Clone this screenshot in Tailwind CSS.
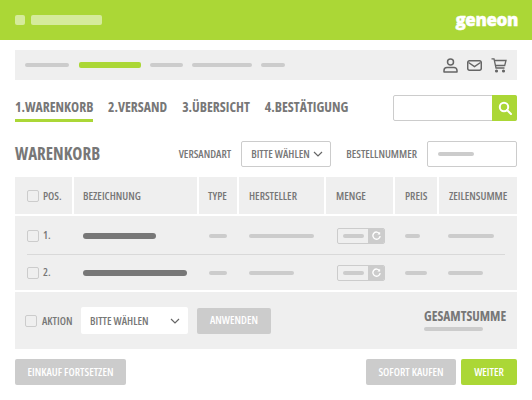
<!DOCTYPE html>
<html lang="de">
<head>
<meta charset="utf-8">
<script src="https://cdn.jsdelivr.net/npm/@tailwindcss/browser@4"></script>
</head>
<body class="w-[532px] h-[400px] overflow-hidden bg-white font-['Open_Sans','Liberation_Sans',sans-serif] font-stretch-[75%] text-[#777]">
<header class="h-10 bg-[#abd736] flex items-center pl-[15px] pr-[14px] gap-1.5">
  <div class="w-2.5 h-2.5 rounded-[2px] bg-white/50"></div>
  <div class="w-[71px] h-2.5 rounded-[2px] bg-white/50"></div>
  <div class="ml-auto text-white text-[17px] leading-none font-extrabold tracking-[-0.4px] font-stretch-normal [-webkit-text-stroke:0.4px_white] -mt-[2px]">geneon</div>
</header>
<nav class="mx-[15px] mt-2.5 h-[30px] bg-[#efefef] flex items-center pl-2.5 pr-2.5">
  <div class="w-11 h-1 rounded-full bg-[#ccc]"></div>
  <div class="w-[62px] h-1.5 rounded-[2px] bg-[#abd736] ml-2.5"></div>
  <div class="w-[33px] h-1 rounded-full bg-[#ccc] ml-[9px]"></div>
  <div class="w-[60px] h-1 rounded-full bg-[#ccc] ml-[9px]"></div>
  <div class="w-6 h-1 rounded-full bg-[#ccc] ml-[9px]"></div>
  <div class="ml-auto flex items-center gap-[9px]">
    <svg class="w-[15px] h-[15px]" viewBox="0 0 15 15" fill="none" stroke="#666" stroke-width="1.5"><circle cx="7.5" cy="4" r="3"/><path d="M1 14v-1.5a3 3 0 0 1 3-3h7a3 3 0 0 1 3 3V14z" stroke-linejoin="round"/></svg>
    <svg class="w-[15px] h-[11px]" viewBox="0 0 15 11" fill="none" stroke="#666" stroke-width="1.5"><rect x="0.7" y="0.7" width="13.6" height="9.6" rx="2"/><path d="M1.5 2.5 7.5 6.5 13.5 2.5"/></svg>
    <svg class="w-4 h-[15px]" viewBox="0 0 16 15" fill="none" stroke="#666" stroke-width="1.3"><path d="M0.5 0.8H3l2 9.2h8.5"/><path d="M3.3 2.5H15l-1.3 5H4.4"/><circle cx="5.5" cy="13" r="0.9" fill="#666"/><circle cx="12.5" cy="13" r="0.9" fill="#666"/></svg>
  </div>
</nav>
<section class="mx-[15px] mt-[15px] h-[26px] flex items-start">
  <div class="flex gap-[15px] pt-1 text-[13.7px] leading-4 font-bold">
    <div class="w-[78px] h-[23px] border-b-[3px] border-[#abd736] whitespace-nowrap">1.WARENKORB</div>
    <div class="whitespace-nowrap">2.VERSAND</div>
    <div class="whitespace-nowrap">3.ÜBERSICHT</div>
    <div class="whitespace-nowrap">4.BESTÄTIGUNG</div>
  </div>
  <div class="ml-auto w-[124px] h-[26px] flex border border-[#ccc] rounded-[2px]">
    <div class="flex-1"></div>
    <div class="w-[25px] -my-px -mr-px bg-[#abd736] rounded-r-[2px] flex items-center justify-center">
      <svg class="w-[14px] h-[14px]" viewBox="0 0 14 14" fill="none" stroke="#fff" stroke-width="2"><circle cx="6" cy="6" r="4.2"/><path d="M9 9l4 4" stroke-linecap="round"/></svg>
    </div>
  </div>
</section>
<section class="mx-[15px] mt-5 h-[26px] flex items-center">
  <h1 class="text-[17px] leading-none font-bold -mt-0.5">WARENKORB</h1>
  <span class="ml-auto text-[11px] font-semibold">VERSANDART</span>
  <div class="ml-[10px] w-[90px] h-[26px] border border-[#ccc] rounded-[2px] flex items-center justify-between pl-[9px] pr-[7px] text-[11px] font-semibold">
    <span class="whitespace-nowrap">BITTE WÄHLEN</span>
    <svg class="w-[10px] h-[6px]" viewBox="0 0 10 6" fill="none" stroke="#666" stroke-width="1.2"><path d="M1 1l4 4 4-4"/></svg>
  </div>
  <span class="ml-[15px] text-[11px] font-semibold">BESTELLNUMMER</span>
  <div class="ml-2.5 w-[90px] h-[26px] border border-[#ccc] rounded-[2px] flex items-center pl-2.5">
    <div class="w-[36px] h-1 rounded-full bg-[#ccc]"></div>
  </div>
</section>
<section class="mx-[15px] mt-2.5">
  <div class="grid grid-cols-[57px_123px_38px_85px_67px_42px_78px] gap-x-0.5 h-[37px] text-[11px] font-semibold">
    <div class="bg-[#efefef] flex items-center pl-3 gap-1 pt-px"><div class="w-3 h-3 border border-[#ccc] rounded-[2px]"></div>POS.</div>
    <div class="bg-[#efefef] flex items-center pl-[9px] pt-px">BEZEICHNUNG</div>
    <div class="bg-[#efefef] flex items-center pl-[9px] pt-px">TYPE</div>
    <div class="bg-[#efefef] flex items-center pl-[10px] pt-px">HERSTELLER</div>
    <div class="bg-[#efefef] flex items-center pl-[10px] pt-px">MENGE</div>
    <div class="bg-[#efefef] flex items-center pl-[10px] pt-px">PREIS</div>
    <div class="bg-[#efefef] flex items-center pl-[10px] pt-px">ZEILENSUMME</div>
  </div>
  <div class="mt-0.5 h-[74px] bg-[#efefef] px-3">
    <div class="h-[39px] pt-px border-b border-[#d9d9d9] flex items-center text-[11px] font-semibold">
      <div class="w-3 h-3 border border-[#ccc] rounded-[2px]"></div><span class="ml-1 w-10">1.</span>
      <div class="w-[73px] h-1.5 rounded-full bg-[#777]"></div>
      <div class="w-[18px] h-1 rounded-full bg-[#ccc] ml-[53px]"></div>
      <div class="w-[65px] h-1 rounded-full bg-[#ccc] ml-[22px]"></div>
      <div class="ml-[23px] w-12 h-4 border border-[#ccc] rounded-[2px] flex items-center overflow-hidden"><div class="w-[21px] h-1 rounded-full bg-[#ccc] ml-[5px]"></div><div class="ml-auto w-4 h-4 bg-[#ccc] flex items-center justify-center"><svg class="w-[9px] h-[9px]" viewBox="0 0 10 10" fill="none" stroke="#fff" stroke-width="1.5"><path d="M8.5 3.2A4 4 0 1 0 9 5.5"/><path d="M9 0.8v3H6" fill="#fff" stroke="none"/></svg></div></div>
      <div class="w-[15px] h-1 rounded-full bg-[#ccc] ml-5"></div>
      <div class="w-[46px] h-1 rounded-full bg-[#ccc] ml-[28px]"></div>
    </div>
    <div class="h-[35px] flex items-center text-[11px] font-semibold">
      <div class="w-3 h-3 border border-[#ccc] rounded-[2px]"></div><span class="ml-1 w-10">2.</span>
      <div class="w-[104px] h-1.5 rounded-full bg-[#777]"></div>
      <div class="w-[18px] h-1 rounded-full bg-[#ccc] ml-[22px]"></div>
      <div class="w-[45px] h-1 rounded-full bg-[#ccc] ml-[22px]"></div>
      <div class="ml-[43px] w-12 h-4 border border-[#ccc] rounded-[2px] flex items-center overflow-hidden"><div class="w-[21px] h-1 rounded-full bg-[#ccc] ml-[5px]"></div><div class="ml-auto w-4 h-4 bg-[#ccc] flex items-center justify-center"><svg class="w-[9px] h-[9px]" viewBox="0 0 10 10" fill="none" stroke="#fff" stroke-width="1.5"><path d="M8.5 3.2A4 4 0 1 0 9 5.5"/><path d="M9 0.8v3H6" fill="#fff" stroke="none"/></svg></div></div>
      <div class="w-[22px] h-1 rounded-full bg-[#ccc] ml-5"></div>
      <div class="w-[35px] h-1 rounded-full bg-[#ccc] ml-[21px]"></div>
    </div>
  </div>
  <div class="mt-0.5 h-[57px] bg-[#efefef] flex items-center pl-2.5 pr-[10px] text-[11px] font-semibold">
    <div class="w-3 h-3 border border-[#ccc] rounded-[2px]"></div>
    <span class="ml-[5px] w-[39px] pt-px">AKTION</span>
    <div class="w-[107px] h-[27px] bg-white rounded-[2px] flex items-center justify-between pl-[9px] pr-2 pt-px">
      <span>BITTE WÄHLEN</span>
      <svg class="w-[10px] h-[6px]" viewBox="0 0 10 6" fill="none" stroke="#666" stroke-width="1.2"><path d="M1 1l4 4 4-4"/></svg>
    </div>
    <div class="ml-[9px] w-[74px] h-[26px] bg-[#ccc] rounded-[2px] flex items-center justify-center text-white">ANWENDEN</div>
    <div class="ml-auto w-[83px]">
      <div class="text-[13.4px] leading-4 font-bold whitespace-nowrap -mt-[3px]">GESAMTSUMME</div>
      <div class="w-[59px] h-1 mt-[3px] rounded-full bg-[#ccc]"></div>
    </div>
  </div>
</section>
<footer class="mx-[15px] mt-2.5 flex text-[11px] font-semibold text-white">
  <div class="w-[111px] h-[26px] pt-px bg-[#ccc] rounded-[2px] flex items-center justify-center">EINKAUF FORTSETZEN</div>
  <div class="ml-auto w-[90px] h-[26px] pt-px bg-[#ccc] rounded-[2px] flex items-center justify-center">SOFORT KAUFEN</div>
  <div class="ml-[5px] w-[56px] h-[26px] pt-px bg-[#abd736] rounded-[2px] flex items-center justify-center">WEITER</div>
</footer>
</body>
</html>
